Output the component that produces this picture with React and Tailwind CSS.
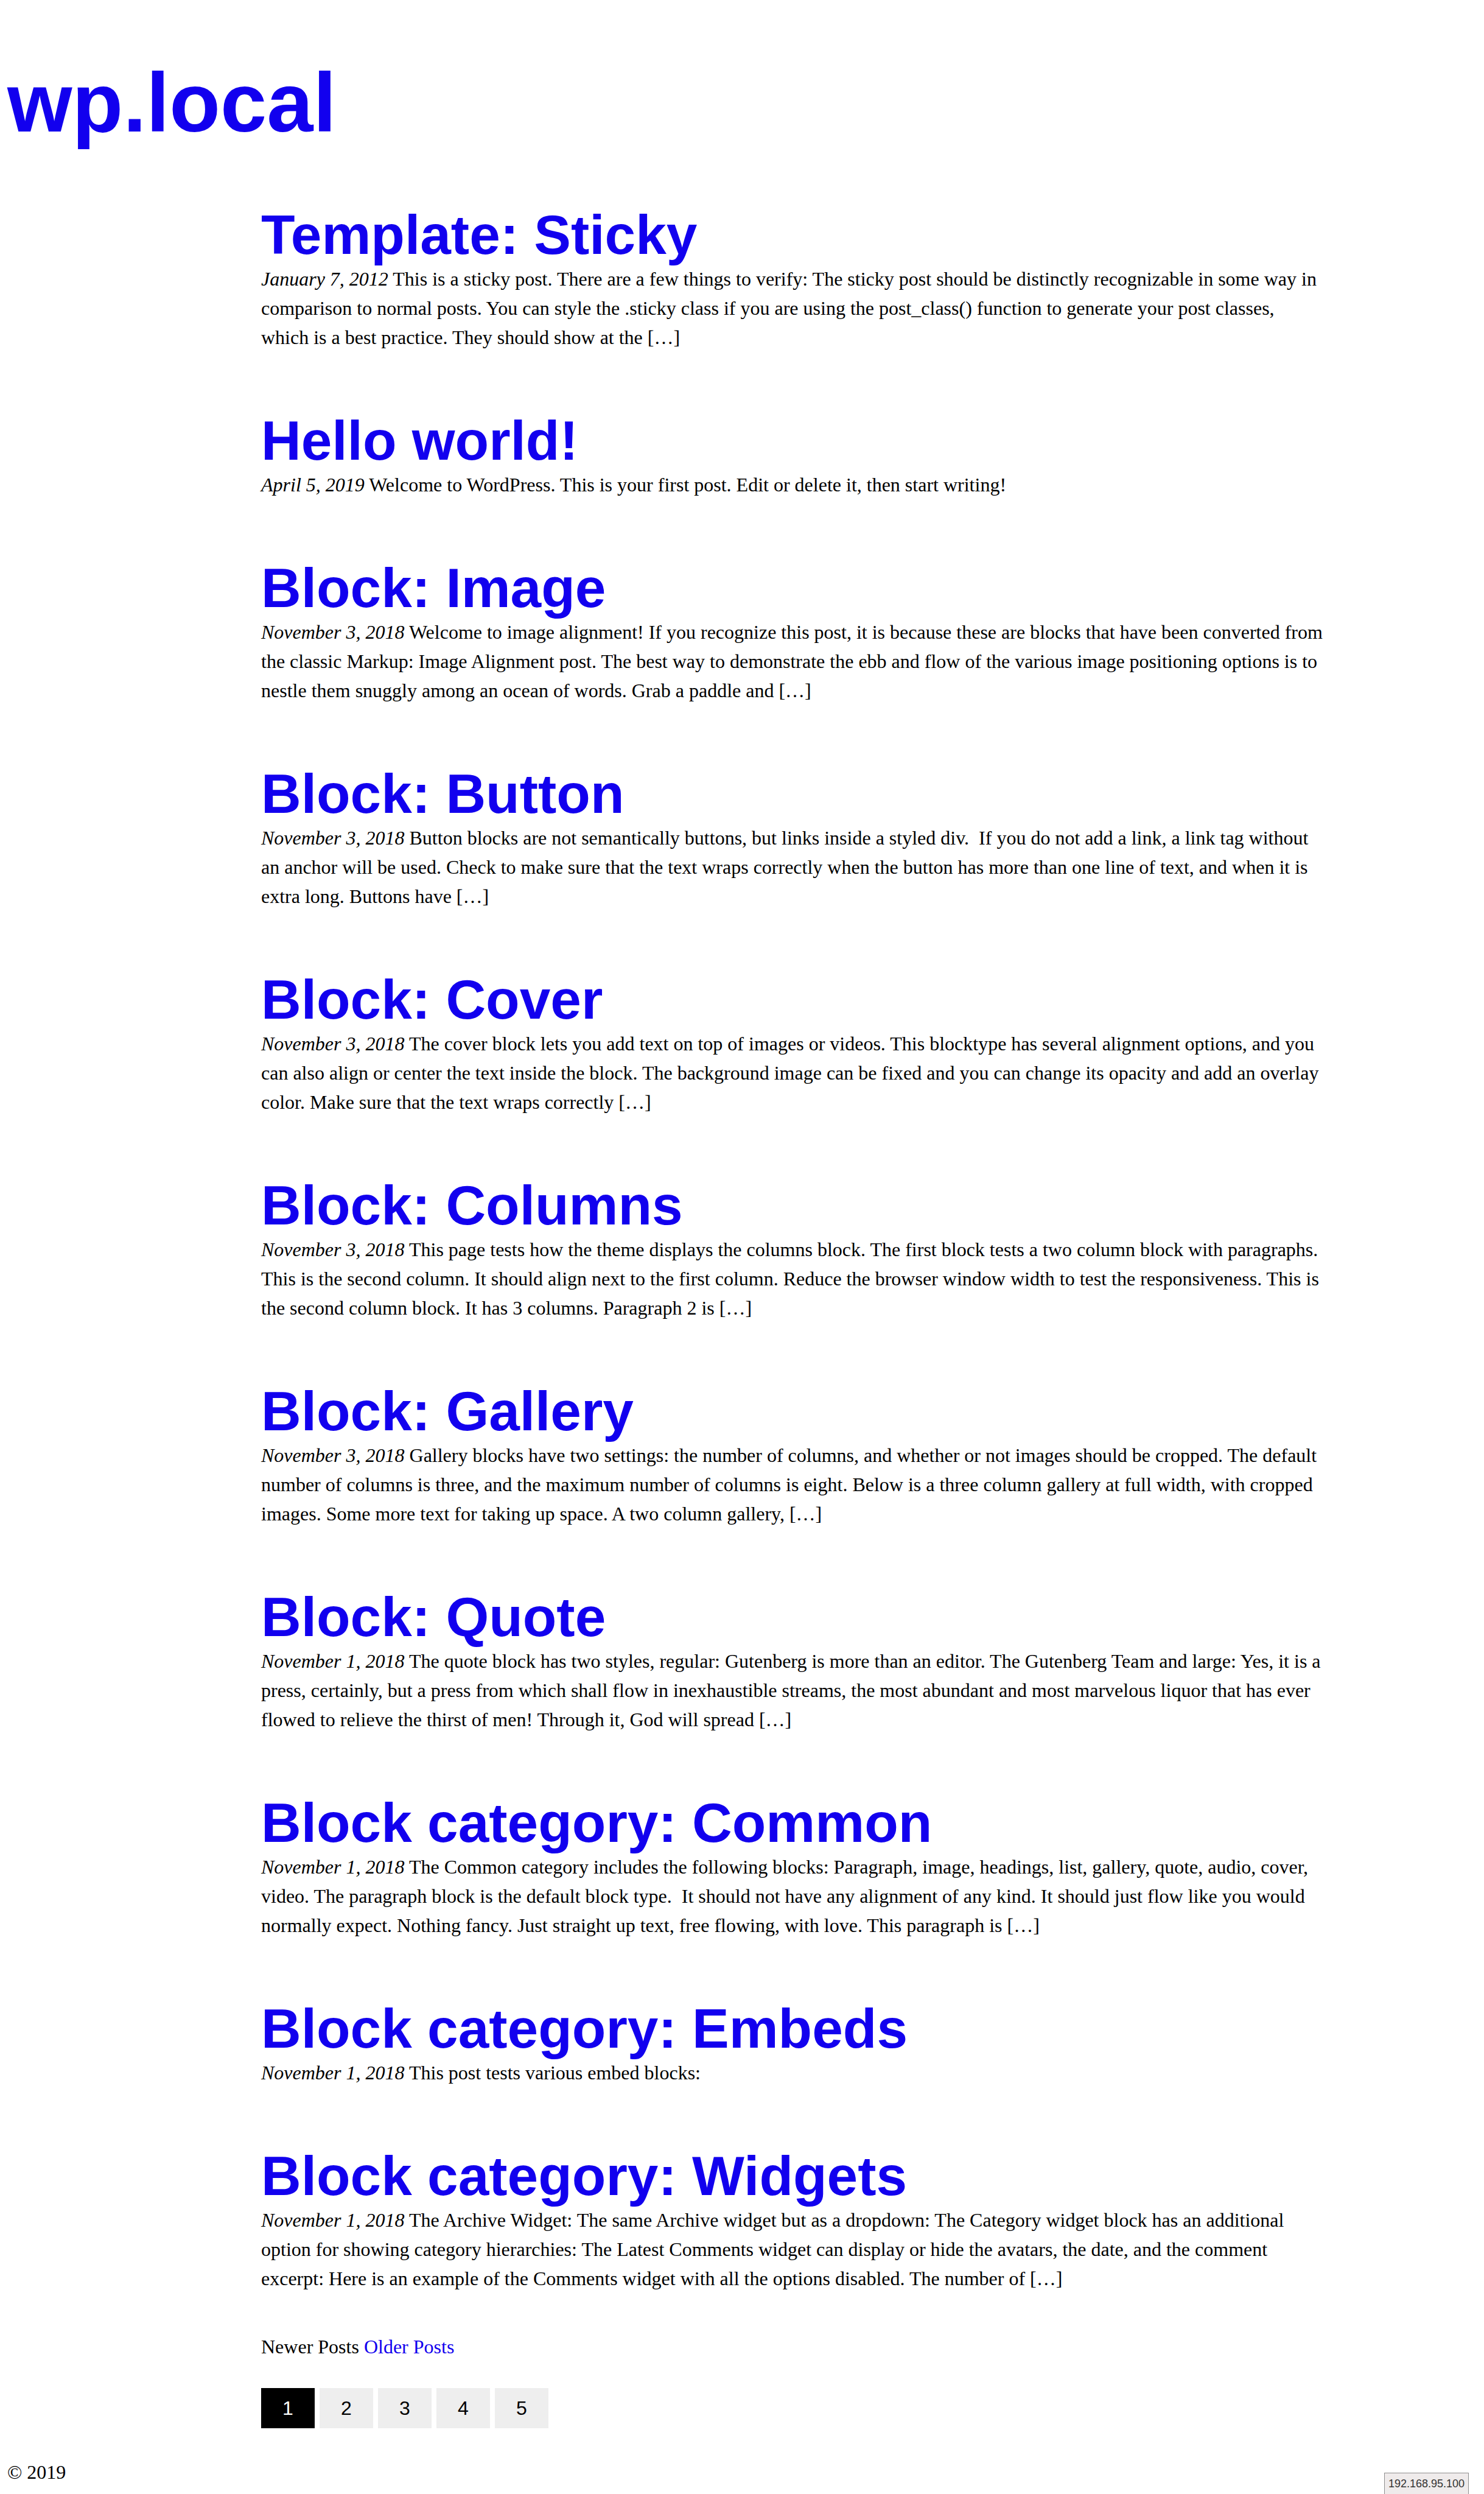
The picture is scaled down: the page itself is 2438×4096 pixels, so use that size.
const posts = [
  {
    title: 'Template: Sticky',
    date: 'January 7, 2012',
    text: 'This is a sticky post. There are a few things to verify: The sticky post should be distinctly recognizable in some way in comparison to normal posts. You can style the .sticky class if you are using the post_class() function to generate your post classes, which is a best practice. They should show at the […]',
  },
  {
    title: 'Hello world!',
    date: 'April 5, 2019',
    text: 'Welcome to WordPress. This is your first post. Edit or delete it, then start writing!',
  },
  {
    title: 'Block: Image',
    date: 'November 3, 2018',
    text: 'Welcome to image alignment! If you recognize this post, it is because these are blocks that have been converted from the classic Markup: Image Alignment post. The best way to demonstrate the ebb and flow of the various image positioning options is to nestle them snuggly among an ocean of words. Grab a paddle and […]',
  },
  {
    title: 'Block: Button',
    date: 'November 3, 2018',
    text: 'Button blocks are not semantically buttons, but links inside a styled div.\u00a0 If you do not add a link, a link tag without an anchor will be used. Check to make sure that the text wraps correctly when the button has more than one line of text, and when it is extra long. Buttons have […]',
  },
  {
    title: 'Block: Cover',
    date: 'November 3, 2018',
    text: 'The cover block lets you add text on top of images or videos. This blocktype has several alignment options, and you can also align or center the text inside the block. The background image can be fixed and you can change its opacity and add an overlay color. Make sure that the text wraps correctly […]',
  },
  {
    title: 'Block: Columns',
    date: 'November 3, 2018',
    text: 'This page tests how the theme displays the columns block. The first block tests a two column block with paragraphs. This is the second column. It should align next to the first column. Reduce the browser window width to test the responsiveness. This is the second column block. It has 3 columns. Paragraph 2 is […]',
  },
  {
    title: 'Block: Gallery',
    date: 'November 3, 2018',
    text: 'Gallery blocks have two settings: the number of columns, and whether or not images should be cropped. The default number of columns is three, and the maximum number of columns is eight. Below is a three column gallery at full width, with cropped images. Some more text for taking up space. A two column gallery, […]',
  },
  {
    title: 'Block: Quote',
    date: 'November 1, 2018',
    text: 'The quote block has two styles, regular: Gutenberg is more than an editor. The Gutenberg Team and large: Yes, it is a press, certainly, but a press from which shall flow in inexhaustible streams, the most abundant and most marvelous liquor that has ever flowed to relieve the thirst of men! Through it, God will spread […]',
  },
  {
    title: 'Block category: Common',
    date: 'November 1, 2018',
    text: 'The Common category includes the following blocks: Paragraph, image, headings, list, gallery, quote, audio, cover, video. The paragraph block is the default block type.\u00a0 It should not have any alignment of any kind. It should just flow like you would normally expect. Nothing fancy. Just straight up text, free flowing, with love. This paragraph is […]',
  },
  {
    title: 'Block category: Embeds',
    date: 'November 1, 2018',
    text: 'This post tests various embed blocks:',
  },
  {
    title: 'Block category: Widgets',
    date: 'November 1, 2018',
    text: 'The Archive Widget: The same Archive widget but as a dropdown: The Category widget block has an additional option for showing category hierarchies: The Latest Comments widget can display or hide the avatars, the date, and the comment excerpt: Here is an example of the Comments widget with all the options disabled. The number of […]',
  },
];

function Post({ title, date, text }) {
  return (
    <article>
      <h2 className="font-['Liberation_Sans',sans-serif] text-[91px] leading-[96px] font-bold text-[#1200ee]">
        <a href="#">{title}</a>
      </h2>
      <p>
        <time className="italic">{date}</time> {text}
      </p>
    </article>
  );
}

function Pagination() {
  return (
    <nav
      aria-label="Pages"
      className="mt-11 flex gap-2 font-['Liberation_Sans',sans-serif] leading-[66px]"
    >
      <span aria-current="page" className="w-[88px] bg-black text-center text-white">
        1
      </span>
      {[2, 3, 4, 5].map((n) => (
        <a key={n} href="#" className="w-[88px] bg-[#eeeeee] text-center text-black">
          {n}
        </a>
      ))}
    </nav>
  );
}

export default function App() {
  return (
    <div className="min-h-screen bg-white font-['Liberation_Serif',serif] text-[32px] leading-[48px] text-black">
      <header className="px-3 pt-[85px]">
        <h1 className="font-['Liberation_Sans',sans-serif] text-[137px] leading-[168px] font-bold text-[#1200ee]">
          <a href="#">wp.local</a>
        </h1>
      </header>
      <main className="mt-[85px] ml-[429px] max-w-[1750px]">
        <div className="flex flex-col gap-[98px]">
          {posts.map((post) => (
            <Post key={post.title} {...post} />
          ))}
        </div>
        <div className="mt-16">
          <span>Newer Posts</span>{' '}
          <a href="#" className="text-[#1200ee]">
            Older Posts
          </a>
        </div>
        <Pagination />
      </main>
      <footer className="mt-12 px-3">© 2019</footer>
      <div className="fixed right-[25px] bottom-0 h-[35px] border border-b-0 border-[#8e8e8e] bg-[#efebeb] px-1.5 font-['Liberation_Sans',sans-serif] text-[18px] leading-[34px] text-[#333333]">
        192.168.95.100
      </div>
    </div>
  );
}
